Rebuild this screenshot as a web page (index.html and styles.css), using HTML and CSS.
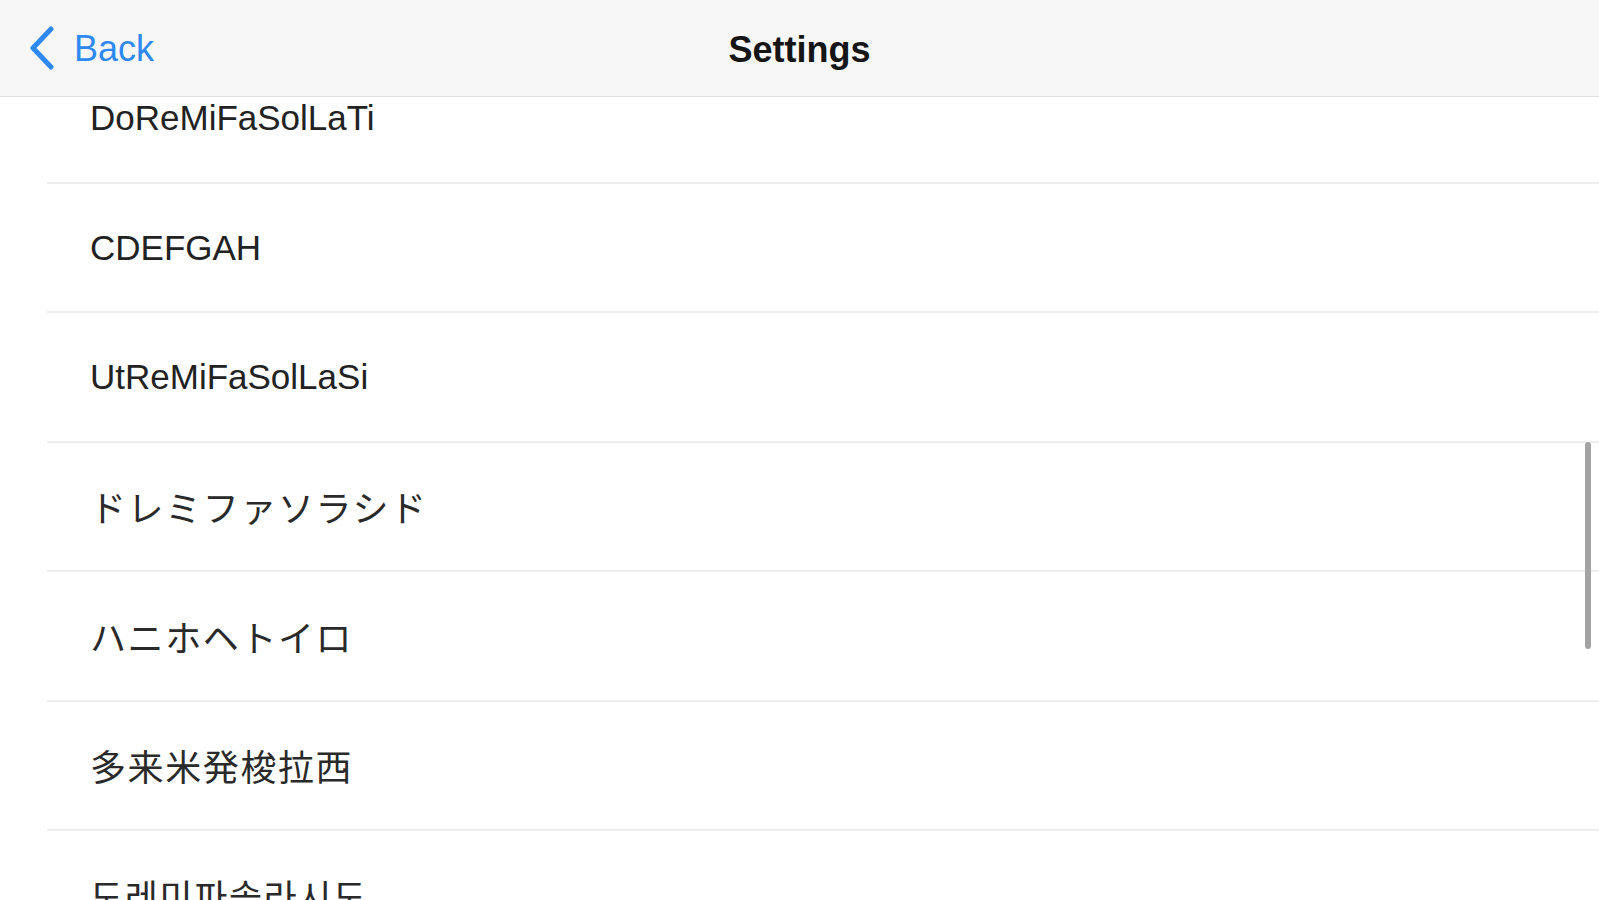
FILE: index.html
```html
<!DOCTYPE html>
<html lang="en">
<head>
<meta charset="utf-8">
<title>Settings</title>
<link rel="stylesheet" href="styles.css">
</head>
<body>
<div class="app">
  <header class="navbar">
    <div class="nav-left">
      <a class="back" href="#">
        <svg class="chev" width="26" height="44" viewBox="0 0 26 44" aria-hidden="true">
          <path d="M22 3 L4 22 L22 41" fill="none" stroke="currentColor" stroke-width="5" stroke-linecap="round" stroke-linejoin="round"/>
        </svg>
        <span class="back-label">Back</span>
      </a>
    </div>
    <h1 class="title">Settings</h1>
    <div class="nav-right"></div>
  </header>
  <main class="viewport">
    <ul class="list">
      <li class="row"><span class="label">DoReMiFaSolLaTi</span></li>
      <li class="row"><span class="label">CDEFGAH</span></li>
      <li class="row"><span class="label">UtReMiFaSolLaSi</span></li>
      <li class="row"><span class="label cjk">ドレミファソラシド</span></li>
      <li class="row"><span class="label cjk">ハニホヘトイロ</span></li>
      <li class="row"><span class="label cjk">多来米発梭拉西</span></li>
      <li class="row"><span class="label kr">도레미파솔라시도</span></li>
    </ul>
    <div class="scrollbar"></div>
  </main>
</div>
</body>
</html>
```
FILE: styles.css
```css
html, body {
  margin: 0;
  padding: 0;
  height: 100%;
  background: #ffffff;
}
body {
  font-family: "Liberation Sans", "Noto Sans CJK JP", Arial, sans-serif;
  color: #222222;
  overflow: hidden;
}
.app {
  display: flex;
  flex-direction: column;
  height: 900px;
}
.navbar {
  flex: 0 0 96px;
  display: grid;
  grid-template-columns: 1fr auto 1fr;
  align-items: center;
  background: #f7f7f7;
  border-bottom: 1px solid #dedede;
  position: relative;
  z-index: 2;
}
.nav-left {
  display: flex;
  align-items: center;
  padding-left: 29px;
}
.back {
  display: flex;
  align-items: center;
  gap: 19px;
  color: #2f89f4;
  text-decoration: none;
}
.chev {
  display: block;
}
.back-label {
  font-size: 36px;
  line-height: 1;
  margin-top: 2px;
}
.title {
  margin: 0;
  font-size: 36px;
  font-weight: bold;
  color: #151515;
  line-height: 1;
  margin-top: 3px;
}
.viewport {
  flex: 1 1 auto;
  overflow: hidden;
  position: relative;
}
.list {
  list-style: none;
  margin: -43px 0 0 0;
  padding: 0;
}
.row {
  height: 127.5px;
  margin-left: 47px;
  padding-left: 43px;
  border-bottom: 2px solid #eeeeee;
  display: flex;
  align-items: center;
}
.label {
  font-size: 35px;
  line-height: 1;
  color: #222222;
}
.label.cjk {
  font-family: "Noto Sans CJK JP", "Liberation Sans", sans-serif;
  font-size: 36px;
  letter-spacing: 1.6px;
  color: #2a2a2a;
}
.label.kr {
  font-family: "Noto Sans CJK KR", "Liberation Sans", sans-serif;
  font-size: 36px;
  letter-spacing: 1.6px;
  color: #2a2a2a;
}
.scrollbar {
  position: absolute;
  right: 8px;
  top: 345px;
  width: 6px;
  height: 207px;
  border-radius: 3px;
  background: #a3a3a3;
}
```
